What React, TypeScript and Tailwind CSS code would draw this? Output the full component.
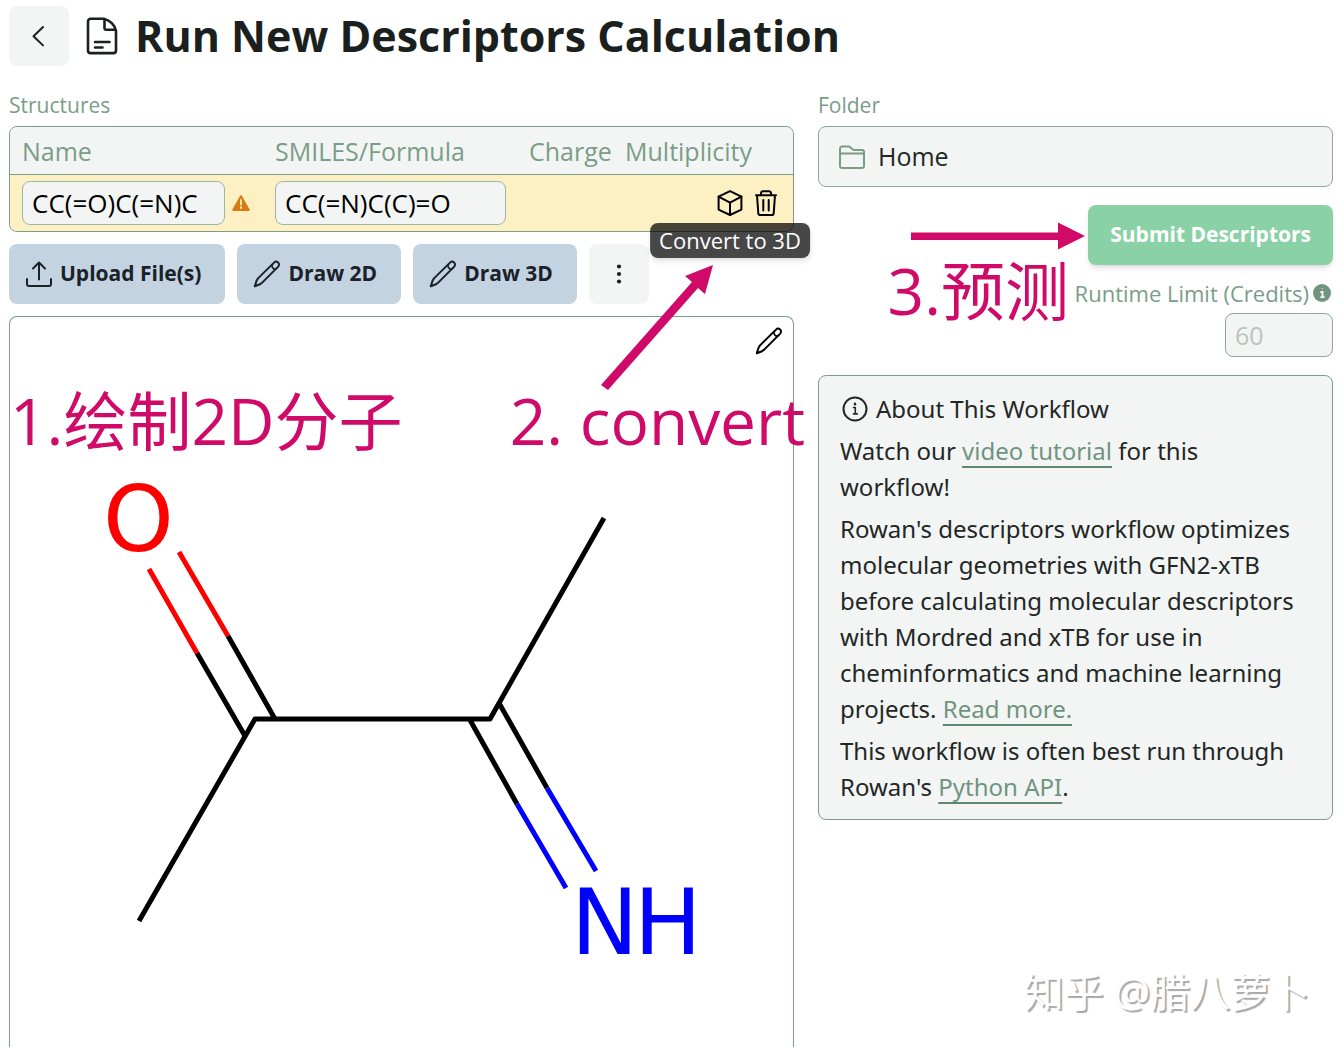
import type { ReactNode } from "react";

type IconProps = { className?: string; strokeWidth?: number; children?: ReactNode };

function Icon({ className = "size-7", strokeWidth = 2, children }: IconProps) {
  return (
    <svg
      viewBox="0 0 28 28"
      className={`shrink-0 overflow-visible ${className}`}
      fill="none"
      stroke="currentColor"
      strokeWidth={strokeWidth}
      strokeLinecap="round"
      strokeLinejoin="round"
      aria-hidden="true"
    >
      {children}
    </svg>
  );
}

function PencilIcon() {
  return (
    <Icon>
      <path d="M1.8 26.3 3.6 20.6 5 18.400 21 2.600a2.900 2.900 0 0 1 4.200 4L9.200 22.600 7 24.200z" />
      <path d="M19.800 4a2.900 2.900 0 0 0 4.200 4" strokeWidth={1.6} />
    </Icon>
  );
}

const bonds = [
  { color: "#000000", d: "M139 921 255 719H490L604 518" },
  { color: "#ff0000", d: "M179 552 228 636M149 569 197 653" },
  { color: "#000000", d: "M228 636 275 719M197 653 245 736" },
  { color: "#000000", d: "M499 703 547 788M470 720 517 804" },
  { color: "#0000ff", d: "M547 788 596 871M517 804 566 888" },
];

const atoms = [
  { label: "O", x: 103, y: 551, color: "#ff0000" },
  { label: "N", x: 571, y: 954, color: "#0000ff" },
  { label: "H", x: 634, y: 954, color: "#0000ff" },
];

function Molecule() {
  return (
    <svg viewBox="10 317 783 730" className="block w-full" role="img" aria-label="CC(=N)C(C)=O">
      {bonds.map((bond) => (
        <path key={bond.d} d={bond.d} fill="none" stroke={bond.color} strokeWidth={5} strokeLinejoin="round" />
      ))}
      {atoms.map((atom) => (
        <text key={atom.label} x={atom.x} y={atom.y} fill={atom.color} fontSize={90} fontFamily="DejaVu Sans, sans-serif">
          {atom.label}
        </text>
      ))}
    </svg>
  );
}

function Note({ className, children }: { className: string; children: ReactNode }) {
  return (
    <span
      className={`pointer-events-none absolute whitespace-nowrap text-[64px] leading-[72px] text-[#cf0a68] ${className}`}
    >
      {children}
    </span>
  );
}

function StructureTable() {
  const field = "h-11 rounded-lg border border-[#9db5a6] bg-[#f3f5f4] px-[9px] text-[26px] text-black";
  return (
    <table className="w-full table-fixed border-separate border-spacing-0 rounded-lg border border-[#7d9d8a] text-left">
      <colgroup>
        <col className="w-[253px]" />
        <col className="w-[254px]" />
        <col className="w-24" />
        <col />
      </colgroup>
      <thead>
        <tr className="h-12 bg-[#f3f5f4] text-[25px] leading-9 text-[#7a9d88]">
          <th className="rounded-tl-lg border-b border-[#7d9d8a] pl-3 font-normal">Name</th>
          <th className="border-b border-[#7d9d8a] pl-3 font-normal">SMILES/Formula</th>
          <th className="border-b border-[#7d9d8a] pl-3 font-normal">Charge</th>
          <th className="rounded-tr-lg border-b border-[#7d9d8a] pl-3 font-normal">Multiplicity</th>
        </tr>
      </thead>
      <tbody>
        <tr className="h-14">
          <td className="rounded-bl-lg bg-[#fdf1c3] pl-3">
            <div className="flex items-center gap-[7px]">
              <input aria-label="Name" defaultValue="CC(=O)C(=N)C" className={`w-[203px] ${field}`} />
              <svg viewBox="0 0 18 16" className="w-[18px] text-[#d97a14]" aria-hidden="true">
                <path
                  d="M9 1.2 16.8 15H1.2z"
                  fill="currentColor"
                  stroke="currentColor"
                  strokeWidth={2}
                  strokeLinejoin="round"
                />
                <path d="M9 5v4.4M9 12v1" stroke="#fdf1c3" strokeWidth={1.8} strokeLinecap="round" />
              </svg>
            </div>
          </td>
          <td className="bg-[#fdf1c3] pl-3">
            <input aria-label="SMILES/Formula" defaultValue="CC(=N)C(C)=O" className={`block w-[231px] ${field}`} />
          </td>
          <td colSpan={2} className="rounded-br-lg bg-[#fdf1c3] pr-[13px]">
            <div className="flex justify-end gap-2">
              <button type="button" aria-label="Convert to 3D" className="relative text-black">
                <Icon>
                  <path d="m14 2.200 11.400 5.400v13L14 26 2.600 20.600v-13z" />
                  <path d="m2.600 7.600 11.400 6 11.400-6M14 13.600V26" />
                </Icon>
                <span
                  role="tooltip"
                  className="absolute left-1/2 top-[34px] z-10 -translate-x-1/2 whitespace-nowrap rounded-lg bg-black/72 px-[9px] text-[22px] leading-[35px] text-white shadow-md"
                >
                  Convert to 3D
                </span>
              </button>
              <button type="button" aria-label="Delete" className="text-black">
                <Icon>
                  <path d="M4 6.200h20M5 6.200l1.300 18a2 2 0 0 0 2 1.900h11.400a2 2 0 0 0 2-1.900l1.300-18M9 6V4.200A2 2 0 0 1 11 2.200h6a2 2 0 0 1 2 2V6M11.300 11v10.500M16.700 11v10.500" />
                </Icon>
              </button>
            </div>
          </td>
        </tr>
      </tbody>
    </table>
  );
}

function Toolbar() {
  const button =
    "flex h-[60px] items-center gap-[7px] rounded-lg bg-[#c3d3e2] pl-4 pr-6 text-[21px] font-bold text-[#1a2128]";
  return (
    <div className="flex gap-3">
      <button type="button" className={button}>
        <Icon>
          <path d="M2 19v5a2 2 0 0 0 2 2h20a2 2 0 0 0 2-2v-5M14 19.500V2.500M8 8.500l6-6 6 6" />
        </Icon>
        Upload File(s)
      </button>
      <button type="button" className={button}>
        <PencilIcon />
        Draw 2D
      </button>
      <button type="button" className={button}>
        <PencilIcon />
        Draw 3D
      </button>
      <button
        type="button"
        aria-label="More"
        className="flex size-[60px] items-center justify-center rounded-lg bg-[#f3f5f4] text-[#1a2128]"
      >
        <svg viewBox="0 0 6 20" className="h-5 w-[6px]" fill="currentColor" aria-hidden="true">
          <circle cx={3} cy={2.5} r={2.1} />
          <circle cx={3} cy={10} r={2.1} />
          <circle cx={3} cy={17.5} r={2.1} />
        </svg>
      </button>
    </div>
  );
}

function TextLink({ children }: { children: ReactNode }) {
  return (
    <a href="#" className="text-[#6f9480] underline decoration-[#5f8673] decoration-2 underline-offset-[6px]">
      {children}
    </a>
  );
}

function About() {
  return (
    <section className="flex flex-col gap-[6px] rounded-lg border border-[#7d9d8a] bg-[#f3f5f4] pb-[14px] pl-[21px] pr-7 pt-[15px] font-['Noto_Sans',sans-serif] text-[24px] leading-9 text-[#222725]">
      <h2 className="flex items-center gap-2">
        <Icon className="size-7">
          <circle cx={15} cy={14} r={11.5} />
          <path d="M13.500 12.500H15.300V18.700M13.500 18.900h3.800" strokeWidth={1.6} />
          <path d="M15 8.700v.5" strokeWidth={2.4} />
        </Icon>
        About This Workflow
      </h2>
      <p>
        Watch our <TextLink>video tutorial</TextLink> for this workflow!
      </p>
      <p>
        Rowan's descriptors workflow optimizes molecular geometries with GFN2-xTB before calculating molecular
        descriptors with Mordred and xTB for use in cheminformatics and machine learning projects.{" "}
        <TextLink>Read more.</TextLink>
      </p>
      <p>
        This workflow is often best run through Rowan's <TextLink>Python API</TextLink>.
      </p>
    </section>
  );
}

export default function App() {
  return (
    <div className="relative bg-white pl-[9px] pr-[11px] pt-[6px] font-['Open_Sans','Noto_Sans_CJK_SC',sans-serif]">
      <header className="flex items-center">
        <button
          type="button"
          aria-label="Back"
          className="flex size-[60px] items-center justify-center rounded-lg bg-[#f3f5f4] text-[#1b1f1d]"
        >
          <Icon>
            <path d="m18 5-9.500 9.200 9.500 9.200" />
          </Icon>
        </button>
        <svg
          viewBox="0 0 32 38"
          className="ml-[17px] w-8 text-[#1b1f1d]"
          fill="none"
          stroke="currentColor"
          strokeWidth={2.6}
          strokeLinecap="round"
          strokeLinejoin="round"
          aria-hidden="true"
        >
          <path d="M5 1.800h12.500C24 3 29 8 30 14v19.500a2.600 2.600 0 0 1-2.600 2.600H4.600A2.600 2.600 0 0 1 2 33.500V4.500A2.600 2.600 0 0 1 5 1.800z" />
          <path d="M18.500 2v9.300a1.500 1.500 0 0 0 1.500 1.500h9.500M9 25h14.500M9 30.500h7.500" />
        </svg>
        <h1 className="ml-[17px] text-[43px] font-bold leading-[60px] text-[#1b1f1d]">Run New Descriptors Calculation</h1>
      </header>

      <main className="mt-[22px] grid grid-cols-[785fr_515fr] items-start gap-6">
        <section>
          <h2 className="mb-[4px] text-[21px] leading-[34px] text-[#7a9d88]">Structures</h2>
          <StructureTable />
          <div className="mt-3">
            <Toolbar />
          </div>
          <div className="relative mt-3 rounded-t-lg border border-b-0 border-[#7d9d8a]">
            <Molecule />
            <button type="button" aria-label="Edit structure" className="absolute right-[10px] top-[10px] text-black">
              <PencilIcon />
            </button>
            <Note className="left-0 top-[68px]">1.绘制2D分子</Note>
            <Note className="right-[-12px] top-[68px]">2. convert</Note>
            <svg viewBox="600 264 115 126" className="absolute right-[78px] top-[-53px] w-[115px] fill-[#cf0a68]" aria-hidden="true">
              <path d="M713 265 685 276 692 282 601 385 608 390 698 288 705 294z" />
            </svg>
          </div>
        </section>

        <aside>
          <h2 className="mb-[4px] text-[21px] leading-[34px] text-[#7a9d88]">Folder</h2>
          <button
            type="button"
            className="flex h-[61px] w-full items-center gap-3 rounded-lg border border-[#8fa698] bg-[#f3f5f4] px-[19px] text-[25px] text-[#222725]"
          >
            <Icon className="size-7 text-[#7a9d88]">
              <path d="M2 11V5.500a2 2 0 0 1 2-2h6.500a3 3 0 0 1 2 .9l2 1.900a3 3 0 0 0 2 .8H24a2 2 0 0 1 2 2V23a2 2 0 0 1-2 2H4a2 2 0 0 1-2-2V12a1.500 1.500 0 0 1 1.500-1.500h21A1.500 1.500 0 0 1 26 12" />
            </Icon>
            Home
          </button>
          <div className="relative mt-[18px] flex flex-col items-end">
            <button
              type="button"
              className="h-[60px] rounded-lg bg-[#8bd1a6] px-[22px] text-[21px] font-bold text-white shadow-md"
            >
              Submit Descriptors
            </button>
            <label htmlFor="limit" className="mt-[11px] flex items-center gap-1 pr-[2px] text-[22px] leading-[34px] text-[#7a9d88]">
              Runtime Limit (Credits)
              <svg viewBox="0 0 18 18" className="w-[18px]" aria-hidden="true">
                <circle cx={9} cy={9} r={9} fill="#6f9480" />
                <path d="M7.500 8H9.500V13M7.500 13.200h4M9.200 4.500v.6" fill="none" stroke="#ffffff" strokeWidth={1.8} />
              </svg>
            </label>
            <input
              id="limit"
              placeholder="60"
              className="mt-[3px] h-11 w-[108px] rounded-lg border border-[#8fa698] bg-[#f3f5f4] px-[9px] text-[25px] placeholder:text-[#b9c4be]"
            />
            <svg viewBox="0 0 174 28" className="absolute right-[248px] top-[17px] w-[174px] fill-[#cf0a68]" aria-hidden="true">
              <path d="M0 10.500h147V.5L174 14 147 27.500V18H0z" />
            </svg>
            <Note className="right-[264px] top-[50px]">3.预测</Note>
          </div>
          <div className="mt-[18px]">
            <About />
          </div>
        </aside>
      </main>

      <span className="pointer-events-none absolute right-[34px] top-[968px] whitespace-nowrap text-[40px] leading-[48px] text-white text-shadow-[2px_2px_1px_#a8a8a8]">
        知乎 @腊八萝卜
      </span>
    </div>
  );
}
